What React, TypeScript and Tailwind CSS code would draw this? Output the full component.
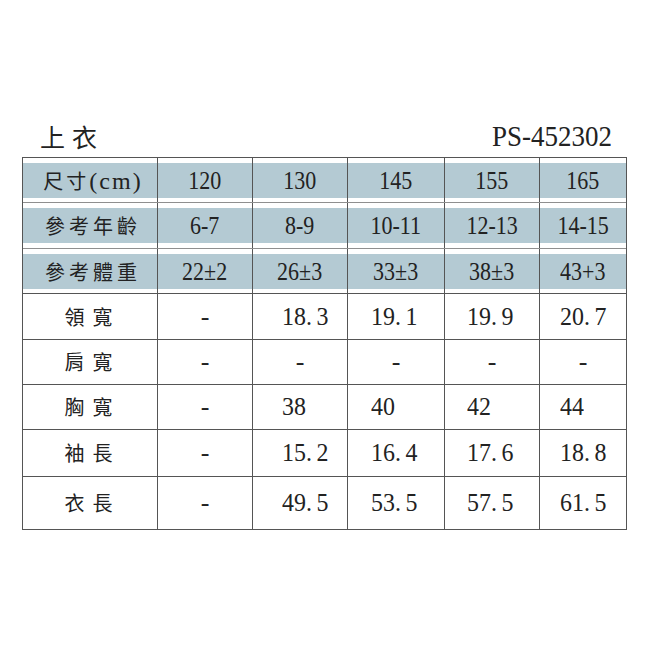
import React from 'react'

const cjk = "font-['Noto_Sans_CJK_TC','Noto_Sans_CJK_SC',sans-serif]"
const serif = "font-['Liberation_Serif','Noto_Sans_CJK_TC',serif]"

const cols = 'grid grid-cols-[134px_95px_95px_97px_95px_87px]'

const headRows = [
  { label: '尺寸', suffix: '(cm)', values: ['120', '130', '145', '155', '165'], h: 'h-[45px]' },
  { label: '參考年齡', values: ['6-7', '8-9', '10-11', '12-13', '14-15'], h: 'h-[46px]' },
  { label: '參考體重', values: ['22±2', '26±3', '33±3', '38±3', '43+3'], h: 'h-[45px]' },
]

const bodyRows = [
  { label: '領寬', values: ['-', '18.3', '19.1', '19.9', '20.7'], h: 'h-[46px]' },
  { label: '肩寬', values: ['-', '-', '-', '-', '-'], h: 'h-[45px]' },
  { label: '胸寬', values: ['-', '38', '40', '42', '44'], h: 'h-[45px]' },
  { label: '袖長', values: ['-', '15.2', '16.4', '17.6', '18.8'], h: 'h-[47px]' },
  { label: '衣長', values: ['-', '49.5', '53.5', '57.5', '61.5'], h: 'h-[52px]' },
]

// left padding of the numbers in the body, per column (col 0 is the dash column)
const padLeft = ['', 'pl-[29px]', 'pl-[23px]', 'pl-[22px]', 'pl-[20px]']

function Decimal({ v }: { v: string }) {
  const [a, b] = v.split('.')
  return (
    <span className="inline-block origin-left scale-x-[0.92]">
      {a}
      {b !== undefined && (
        <>
          <span className="mr-[5px]">.</span>
          {b}
        </>
      )}
    </span>
  )
}

export default function App() {
  return (
    <div className="h-[650px] w-[650px] overflow-hidden bg-white pt-[118px] text-[#222]">
      <div className="flex h-[37px] items-center justify-between pl-[40px] pr-[38px]">
        <span className={`${cjk} text-[25px] leading-none tracking-[7px]`}>上衣</span>
        <span className={`${serif} inline-block origin-right scale-x-[0.93] text-[29px] leading-none`}>
          PS-452302
        </span>
      </div>

      <div className="mt-[2px] ml-[22px] w-[605px] border border-[#555]">
        {headRows.map((r, ri) => (
          <div
            key={r.label}
            className={`${cols} ${r.h} border-b ${ri === 2 ? 'border-[#555]' : 'border-[#8f8f8f]'}`}
          >
            <div className="pt-[5px]">
              <div className="flex h-[35px] items-center justify-center bg-[#b4cad3] pl-[6px]">
                <span className={`${cjk} text-[20px] ${r.suffix ? 'tracking-[3px]' : 'tracking-[4px]'}`}>
                  {r.label}
                </span>
                {r.suffix && (
                  <span className={`${serif} inline-block text-[24px] tracking-[2px]`}>{r.suffix}</span>
                )}
              </div>
            </div>
            {r.values.map((v, i) => (
              <div key={i} className="border-l border-[#555] pt-[5px]">
                <div className="flex h-[35px] items-center justify-center bg-[#b4cad3]">
                  <span className={`${serif} inline-block scale-x-[0.88] text-[25px] leading-none`}>{v}</span>
                </div>
              </div>
            ))}
          </div>
        ))}

        {bodyRows.map((r, ri) => (
          <div
            key={r.label}
            className={`${cols} ${r.h} ${ri < bodyRows.length - 1 ? 'border-b border-[#555]' : ''}`}
          >
            <div className="flex items-center justify-center pr-[3px]">
              <span className={`${cjk} pl-[8px] text-[20px] tracking-[8px]`}>{r.label}</span>
            </div>
            {r.values.map((v, i) => (
              <div
                key={i}
                className={`flex items-center border-l border-[#555] ${
                  v === '-' ? 'justify-center' : `justify-start ${padLeft[i]}`
                }`}
              >
                <span className={`${serif} text-[26px] leading-none`}>
                  {v === '-' ? '-' : <Decimal v={v} />}
                </span>
              </div>
            ))}
          </div>
        ))}
      </div>
    </div>
  )
}
